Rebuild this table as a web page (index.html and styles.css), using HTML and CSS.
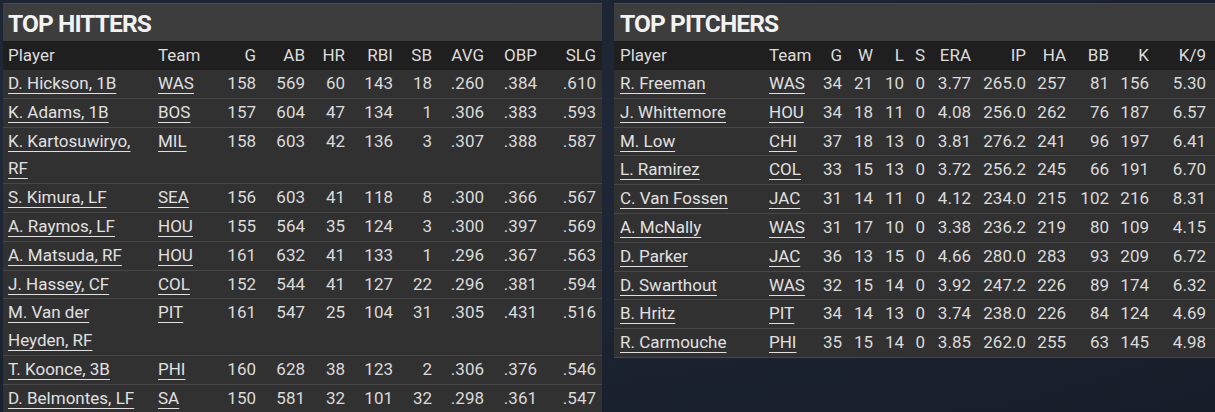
FILE: index.html
```html
<!DOCTYPE html>
<html lang="en">
<head>
<meta charset="utf-8">
<title>Top Hitters &amp; Pitchers</title>
<link rel="stylesheet" href="styles.css">
</head>
<body>
<div class="page">
  <section class="panel panel-hitters">
    <h2 class="panel-title">TOP HITTERS</h2>
    <table class="stats hitters">
      <colgroup>
        <col class="c-player-h"><col class="c-team-h"><col class="c-g-h"><col class="c-ab"><col class="c-hr"><col class="c-rbi"><col class="c-sb"><col class="c-avg"><col class="c-obp"><col class="c-slg">
      </colgroup>
      <thead>
        <tr><th class="txt">Player</th><th class="txt team">Team</th><th>G</th><th>AB</th><th>HR</th><th>RBI</th><th>SB</th><th>AVG</th><th>OBP</th><th>SLG</th></tr>
      </thead>
      <tbody>
        <tr><td class="txt"><a href="#">D. Hickson, 1B</a></td><td class="txt team"><a href="#">WAS</a></td><td>158</td><td>569</td><td>60</td><td>143</td><td>18</td><td>.260</td><td>.384</td><td>.610</td></tr>
        <tr><td class="txt"><a href="#">K. Adams, 1B</a></td><td class="txt team"><a href="#">BOS</a></td><td>157</td><td>604</td><td>47</td><td>134</td><td>1</td><td>.306</td><td>.383</td><td>.593</td></tr>
        <tr><td class="txt"><a href="#">K. Kartosuwiryo, RF</a></td><td class="txt team"><a href="#">MIL</a></td><td>158</td><td>603</td><td>42</td><td>136</td><td>3</td><td>.307</td><td>.388</td><td>.587</td></tr>
        <tr><td class="txt"><a href="#">S. Kimura, LF</a></td><td class="txt team"><a href="#">SEA</a></td><td>156</td><td>603</td><td>41</td><td>118</td><td>8</td><td>.300</td><td>.366</td><td>.567</td></tr>
        <tr><td class="txt"><a href="#">A. Raymos, LF</a></td><td class="txt team"><a href="#">HOU</a></td><td>155</td><td>564</td><td>35</td><td>124</td><td>3</td><td>.300</td><td>.397</td><td>.569</td></tr>
        <tr><td class="txt"><a href="#">A. Matsuda, RF</a></td><td class="txt team"><a href="#">HOU</a></td><td>161</td><td>632</td><td>41</td><td>133</td><td>1</td><td>.296</td><td>.367</td><td>.563</td></tr>
        <tr><td class="txt"><a href="#">J. Hassey, CF</a></td><td class="txt team"><a href="#">COL</a></td><td>152</td><td>544</td><td>41</td><td>127</td><td>22</td><td>.296</td><td>.381</td><td>.594</td></tr>
        <tr><td class="txt"><a href="#">M. Van der Heyden, RF</a></td><td class="txt team"><a href="#">PIT</a></td><td>161</td><td>547</td><td>25</td><td>104</td><td>31</td><td>.305</td><td>.431</td><td>.516</td></tr>
        <tr><td class="txt"><a href="#">T. Koonce, 3B</a></td><td class="txt team"><a href="#">PHI</a></td><td>160</td><td>628</td><td>38</td><td>123</td><td>2</td><td>.306</td><td>.376</td><td>.546</td></tr>
        <tr><td class="txt"><a href="#">D. Belmontes, LF</a></td><td class="txt team"><a href="#">SA</a></td><td>150</td><td>581</td><td>32</td><td>101</td><td>32</td><td>.298</td><td>.361</td><td>.547</td></tr>
      </tbody>
    </table>
  </section>

  <section class="panel panel-pitchers">
    <h2 class="panel-title">TOP PITCHERS</h2>
    <table class="stats pitchers">
      <colgroup>
        <col class="c-player-p"><col class="c-team-p"><col class="c-g-p"><col class="c-w"><col class="c-l"><col class="c-s"><col class="c-era"><col class="c-ip"><col class="c-ha"><col class="c-bb"><col class="c-k"><col class="c-k9">
      </colgroup>
      <thead>
        <tr><th class="txt">Player</th><th class="txt team">Team</th><th>G</th><th>W</th><th>L</th><th>S</th><th>ERA</th><th>IP</th><th>HA</th><th>BB</th><th>K</th><th class="last">K/9</th></tr>
      </thead>
      <tbody>
        <tr><td class="txt"><a href="#">R. Freeman</a></td><td class="txt team"><a href="#">WAS</a></td><td>34</td><td>21</td><td>10</td><td>0</td><td>3.77</td><td>265.0</td><td>257</td><td>81</td><td>156</td><td class="last">5.30</td></tr>
        <tr><td class="txt"><a href="#">J. Whittemore</a></td><td class="txt team"><a href="#">HOU</a></td><td>34</td><td>18</td><td>11</td><td>0</td><td>4.08</td><td>256.0</td><td>262</td><td>76</td><td>187</td><td class="last">6.57</td></tr>
        <tr><td class="txt"><a href="#">M. Low</a></td><td class="txt team"><a href="#">CHI</a></td><td>37</td><td>18</td><td>13</td><td>0</td><td>3.81</td><td>276.2</td><td>241</td><td>96</td><td>197</td><td class="last">6.41</td></tr>
        <tr><td class="txt"><a href="#">L. Ramirez</a></td><td class="txt team"><a href="#">COL</a></td><td>33</td><td>15</td><td>13</td><td>0</td><td>3.72</td><td>256.2</td><td>245</td><td>66</td><td>191</td><td class="last">6.70</td></tr>
        <tr><td class="txt"><a href="#">C. Van Fossen</a></td><td class="txt team"><a href="#">JAC</a></td><td>31</td><td>14</td><td>11</td><td>0</td><td>4.12</td><td>234.0</td><td>215</td><td>102</td><td>216</td><td class="last">8.31</td></tr>
        <tr><td class="txt"><a href="#">A. McNally</a></td><td class="txt team"><a href="#">WAS</a></td><td>31</td><td>17</td><td>10</td><td>0</td><td>3.38</td><td>236.2</td><td>219</td><td>80</td><td>109</td><td class="last">4.15</td></tr>
        <tr><td class="txt"><a href="#">D. Parker</a></td><td class="txt team"><a href="#">JAC</a></td><td>36</td><td>13</td><td>15</td><td>0</td><td>4.66</td><td>280.0</td><td>283</td><td>93</td><td>209</td><td class="last">6.72</td></tr>
        <tr><td class="txt"><a href="#">D. Swarthout</a></td><td class="txt team"><a href="#">WAS</a></td><td>32</td><td>15</td><td>14</td><td>0</td><td>3.92</td><td>247.2</td><td>226</td><td>89</td><td>174</td><td class="last">6.32</td></tr>
        <tr><td class="txt"><a href="#">B. Hritz</a></td><td class="txt team"><a href="#">PIT</a></td><td>34</td><td>14</td><td>13</td><td>0</td><td>3.74</td><td>238.0</td><td>226</td><td>84</td><td>124</td><td class="last">4.69</td></tr>
        <tr><td class="txt"><a href="#">R. Carmouche</a></td><td class="txt team"><a href="#">PHI</a></td><td>35</td><td>15</td><td>14</td><td>0</td><td>3.85</td><td>262.0</td><td>255</td><td>63</td><td>145</td><td class="last">4.98</td></tr>
      </tbody>
    </table>
  </section>
</div>
</body>
</html>
```

FILE: styles.css
```css
* { box-sizing: border-box; }

html, body {
  margin: 0;
  padding: 0;
  height: 100%;
}

body {
  background: #1b2230;
  background-image: radial-gradient(ellipse at 20% 30%, #222b3b 0%, #1b2230 60%, #171d29 100%);
  font-family: Roboto, "Noto Sans", "Liberation Sans", sans-serif;
  color: #dadada;
  overflow: hidden;
}

.page {
  display: flex;
  align-items: flex-start;
  gap: 12px;
  padding: 3px 0 0 3px;
}

.panel {
  background: #313131;
  flex: 0 0 auto;
}

.panel-hitters { width: 599px; }
.panel-pitchers { width: 601px; }

.panel-title {
  margin: 0;
  height: 38px;
  line-height: 40px;
  padding: 0 5px;
  background: #3d3d3d;
  border-top: 1px solid #4a4a4a;
  font-size: 24.5px;
  font-weight: 700;
  letter-spacing: -0.9px;
  color: #f2f2f2;
}

.panel-pitchers .panel-title { padding-left: 6px; }

.stats {
  width: 100%;
  border-collapse: collapse;
  table-layout: fixed;
  font-size: 17px;
}

.stats th,
.stats td {
  padding: 0 6px 0 0;
  text-align: right;
  font-weight: 400;
  white-space: nowrap;
  vertical-align: top;
}

.stats thead th {
  background: #1f1f1f;
  height: 29px;
  line-height: 29px;
  color: #dcdcdc;
}

.stats tbody td {
  line-height: 27.8px;
  border-bottom: 1px solid #474747;
  background: #313131;
}

.stats .txt {
  text-align: left;
  white-space: normal;
  padding-left: 5px;
  padding-right: 10px;
}

.pitchers .txt { padding-left: 6px; }

.stats .team { padding-left: 5px; }
.pitchers .team { padding-left: 6px; }

.stats .last { padding-right: 9px; }

.stats a {
  color: #e0e0e0;
  text-decoration: underline;
  text-decoration-thickness: 1px;
  text-underline-offset: 4px;
}

/* hitters columns */
.c-player-h { width: 150px; }
.c-team-h { width: 59px; }
.c-g-h { width: 50px; }
.c-ab { width: 49px; }
.c-hr { width: 40px; }
.c-rbi { width: 48px; }
.c-sb { width: 39px; }
.c-avg { width: 52px; }
.c-obp { width: 53px; }
.c-slg { width: 59px; }

/* pitchers columns */
.c-player-p { width: 149px; }
.c-team-p { width: 49px; }
.c-g-p { width: 36px; }
.c-w { width: 31px; }
.c-l { width: 31px; }
.c-s { width: 21px; }
.c-era { width: 46px; }
.c-ip { width: 55px; }
.c-ha { width: 40px; }
.c-bb { width: 43px; }
.c-k { width: 40px; }
.c-k9 { width: 60px; }
```
